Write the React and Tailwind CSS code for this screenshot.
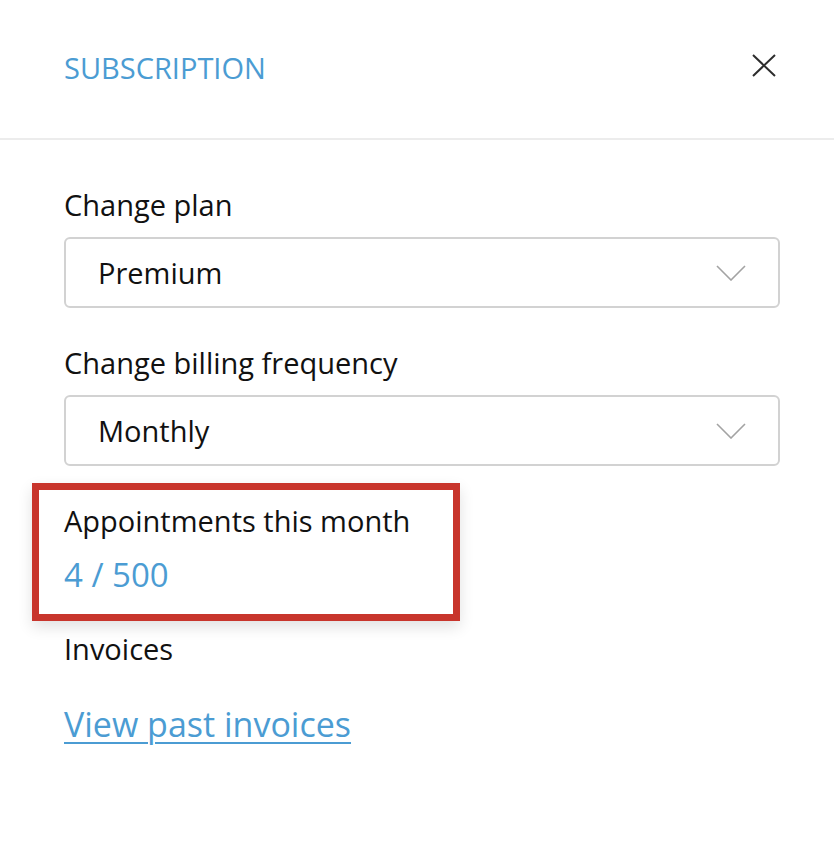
function Chevron() {
  return (
    <svg width="30" height="16" viewBox="0 0 30 16" fill="none" className="shrink-0">
      <path d="M1 1 L15 15 L29 1" stroke="#a3a3a3" strokeWidth="1.6" />
    </svg>
  );
}

function CloseIcon() {
  return (
    <svg width="24" height="23" viewBox="0 0 24 23" fill="none" className="shrink-0 mt-[6px]">
      <path d="M1 1 L23 22 M23 1 L1 22" stroke="#2d2d2d" strokeWidth="2" />
    </svg>
  );
}

function SelectBox({ value }) {
  return (
    <div className="h-[71px] w-full border-2 border-[#d2d2d2] rounded-[6px] bg-white flex items-center justify-between pl-[32px] pr-[32px]">
      <span className="text-[29px] text-[#111]">{value}</span>
      <Chevron />
    </div>
  );
}

export default function App() {
  return (
    <div className="w-[834px] h-[858px] bg-white overflow-hidden" style={{ fontFamily: '"Open Sans", "Liberation Sans", sans-serif' }}>
      {/* header */}
      <div className="h-[140px] border-b-2 border-[#ececec] pl-[64px] pr-[58px] pt-[48px] flex items-start justify-between">
        <h2 className="text-[29px] leading-[40px] text-[#4b9cd3]">SUBSCRIPTION</h2>
        <CloseIcon />
      </div>

      <div className="pl-[64px] pr-[54px] pt-[45px]">
        <p className="text-[29px] leading-[40px] text-[#111]">Change plan</p>
        <div className="mt-[12px]">
          <SelectBox value="Premium" />
        </div>

        <p className="text-[29px] leading-[40px] text-[#111] mt-[35px]">Change billing frequency</p>
        <div className="mt-[12px]">
          <SelectBox value="Monthly" />
        </div>

        <div className="relative mt-[35px]">
          <div className="absolute left-[-32px] top-[-18px] w-[428px] h-[138px] border-[7px] border-[#c8352c] shadow-[0_6px_14px_rgba(0,0,0,0.12)] pointer-events-none" />
          <p className="text-[29px] leading-[40px] text-[#111]">Appointments this month</p>
          <p className="text-[33px] leading-[44px] text-[#4b9cd3] mt-[12px]">4 / 500</p>
        </div>

        <p className="text-[29px] leading-[40px] text-[#111] mt-[32px]">Invoices</p>
        <a href="#" className="block mt-[32px] text-[34px] leading-[46px] text-[#4b9cd3] underline underline-offset-[5px] decoration-2">
          View past invoices
        </a>
      </div>
    </div>
  );
}
